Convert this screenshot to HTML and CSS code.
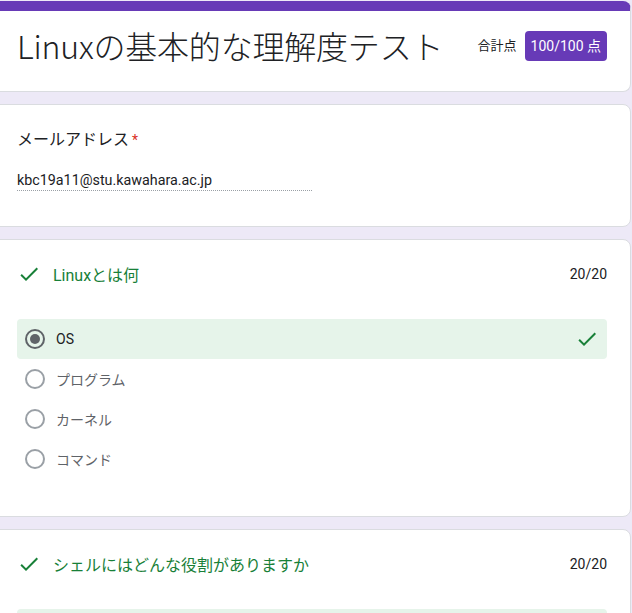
FILE: index.html
```html
<!DOCTYPE html>
<html lang="ja">
<head>
<meta charset="utf-8">
<link rel="stylesheet" href="styles.css">
</head>
<body>
<div class="page">
  <div class="card head-card">
    <h1 class="form-title">Linuxの基本的な理解度テスト</h1>
    <div class="total">
      <span class="total-label">合計点</span>
      <span class="badge">100/100 点</span>
    </div>
  </div>

  <div class="card email-card">
    <div class="label">メールアドレス<span class="req">*</span></div>
    <div class="email">kbc19a11@stu.kawahara.ac.jp</div>
  </div>

  <div class="card q-card">
    <div class="q-head">
      <svg class="check" viewBox="0 0 24 24" width="24" height="24"><path d="M9 16.17L4.83 12l-1.42 1.41L9 19 21 7l-1.41-1.41z"/></svg>
      <span class="q-title">Linuxとは何</span>
      <span class="q-score">20/20</span>
    </div>
    <div class="options">
      <div class="option correct">
        <span class="radio checked"></span>
        <span class="opt-text">OS</span>
        <svg class="check opt-check" viewBox="0 0 24 24" width="24" height="24"><path d="M9 16.17L4.83 12l-1.42 1.41L9 19 21 7l-1.41-1.41z"/></svg>
      </div>
      <div class="option">
        <span class="radio"></span>
        <span class="opt-text muted">プログラム</span>
      </div>
      <div class="option">
        <span class="radio"></span>
        <span class="opt-text muted">カーネル</span>
      </div>
      <div class="option">
        <span class="radio"></span>
        <span class="opt-text muted">コマンド</span>
      </div>
    </div>
  </div>

  <div class="card q-card">
    <div class="q-head">
      <svg class="check" viewBox="0 0 24 24" width="24" height="24"><path d="M9 16.17L4.83 12l-1.42 1.41L9 19 21 7l-1.41-1.41z"/></svg>
      <span class="q-title">シェルにはどんな役割がありますか</span>
      <span class="q-score">20/20</span>
    </div>
    <div class="options">
      <div class="option correct">
        <span class="radio checked"></span>
      </div>
    </div>
  </div>
</div>
</body>
</html>
```

FILE: styles.css
```css
html, body {
  margin: 0;
  padding: 0;
}
body {
  background: #ede9f7;
  font-family: Roboto, "Noto Sans CJK JP", sans-serif;
  color: #202124;
  overflow: hidden;
}
.page {
  margin-left: -10px;
  width: 641px;
  padding-top: 1px;
  display: flex;
  flex-direction: column;
  gap: 12px;
}
.card {
  background: #fff;
  border: 1px solid #dadce0;
  border-radius: 8px;
  padding: 0 23px 0 26px;
  box-sizing: border-box;
}
.head-card {
  border-top: 10px solid #673ab7;
  height: 91px;
  padding-bottom: 13px;
  display: flex;
  align-items: center;
}
.form-title {
  margin: 0;
  font-family: "Noto Sans CJK JP", sans-serif;
  font-weight: 300;
  font-size: 32px;
  line-height: 40px;
  color: #202124;
  letter-spacing: -0.2px;
}
.total {
  margin-left: auto;
  display: flex;
  align-items: center;
  gap: 8px;
}
.total-label {
  font-size: 13px;
  color: #202124;
}
.badge {
  background: #673ab7;
  color: #fff;
  border-radius: 4px;
  height: 30px;
  line-height: 30px;
  padding: 0 6px;
  font-size: 14px;
  font-weight: 400;
  margin-top: 2px;
}
.email-card {
  height: 123px;
  padding-top: 23px;
}
.label {
  font-size: 16px;
  line-height: 24px;
  color: #202124;
}
.req {
  color: #d93025;
  margin-left: 3px;
  font-size: 14px;
}
.email {
  margin-top: 18px;
  width: 295px;
  font-size: 14.3px;
  line-height: 20px;
  color: #202124;
  border-bottom: 1px dotted #9aa0a6;
}
.q-card {
  padding-top: 22px;
  padding-bottom: 37px;
}
.q-head {
  display: flex;
  align-items: center;
  height: 24px;
  gap: 12px;
}
.check {
  fill: #188038;
  flex: none;
}
.q-title {
  font-size: 16px;
  color: #188038;
}
.q-score {
  margin-left: auto;
  font-size: 14px;
  color: #202124;
}
.options {
  margin-top: 33px;
  display: flex;
  flex-direction: column;
}
.option {
  height: 40px;
  display: flex;
  align-items: center;
  padding: 0 8px;
  border-radius: 4px;
}
.option.correct {
  background: #e6f4ea;
}
.radio {
  width: 20px;
  height: 20px;
  box-sizing: border-box;
  border: 2px solid #9aa0a6;
  border-radius: 50%;
  flex: none;
  display: flex;
  align-items: center;
  justify-content: center;
}
.radio.checked {
  border-color: #5f6368;
}
.radio.checked::after {
  content: "";
  width: 10px;
  height: 10px;
  border-radius: 50%;
  background: #5f6368;
}
.opt-text {
  margin-left: 11px;
  font-size: 14px;
  color: #202124;
}
.opt-text.muted {
  color: #5f6368;
}
.opt-check {
  margin-left: auto;
}
```
